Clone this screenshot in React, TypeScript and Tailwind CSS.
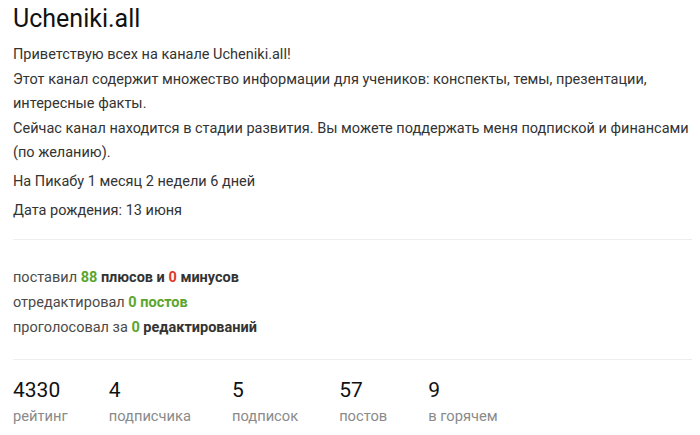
import React from "react";

const stats = [
  { value: "4330", label: "рейтинг" },
  { value: "4", label: "подписчика" },
  { value: "5", label: "подписок" },
  { value: "57", label: "постов" },
  { value: "9", label: "в горячем" },
];

export default function App() {
  return (
    <div className="w-[700px] h-[435px] bg-white overflow-hidden font-['Roboto',sans-serif]">
      <div className="pl-[13px] pr-[8px]">
        <h1 className="pt-[3px] text-[25px] leading-[32px] text-[#111]">Ucheniki.all</h1>

        <div className="mt-[8px] text-[14.5px] leading-[24.5px] text-[#333]">
          <p>Приветствую всех на канале Ucheniki.all!</p>
          <p>
            Этот канал содержит множество информации для учеников: конспекты, темы, презентации,
            интересные факты.
          </p>
          <p>
            Сейчас канал находится в стадии развития. Вы можете поддержать меня подпиской и финансами
            (по желанию).
          </p>
        </div>

        <div className="mt-[4px] text-[14.5px] leading-[24.5px] text-[#333]">На Пикабу 1 месяц 2 недели 6 дней</div>
        <div className="mt-[5px] text-[14.5px] leading-[24.5px] text-[#333]">Дата рождения: 13 июня</div>

        <div className="mt-[15px] border-t border-[#eeeeee]" />

        <div className="pt-[25px] pb-[19px] text-[14.5px] leading-[25px] text-[#4a4a4a]">
          <div>
            поставил <span className="font-bold text-[#5aa62d]">88</span>{" "}
            <span className="font-bold text-[#333]">плюсов и</span>{" "}
            <span className="font-bold text-[#e0392a]">0</span>{" "}
            <span className="font-bold text-[#333]">минусов</span>
          </div>
          <div>
            отредактировал <span className="font-bold text-[#5aa62d]">0 постов</span>
          </div>
          <div>
            проголосовал за <span className="font-bold text-[#5aa62d]">0</span>{" "}
            <span className="font-bold text-[#333]">редактирований</span>
          </div>
        </div>

        <div className="border-t border-[#eeeeee]" />

        <div className="flex pt-[17px]">
          {stats.map((s) => (
            <div key={s.label} className="mr-[41px] flex flex-col">
              <span className="text-[21px] leading-[26px] text-[#111]">{s.value}</span>
              <span className="text-[14.7px] leading-[26px] text-[#8a8a8a]">{s.label}</span>
            </div>
          ))}
        </div>
      </div>
    </div>
  );
}
